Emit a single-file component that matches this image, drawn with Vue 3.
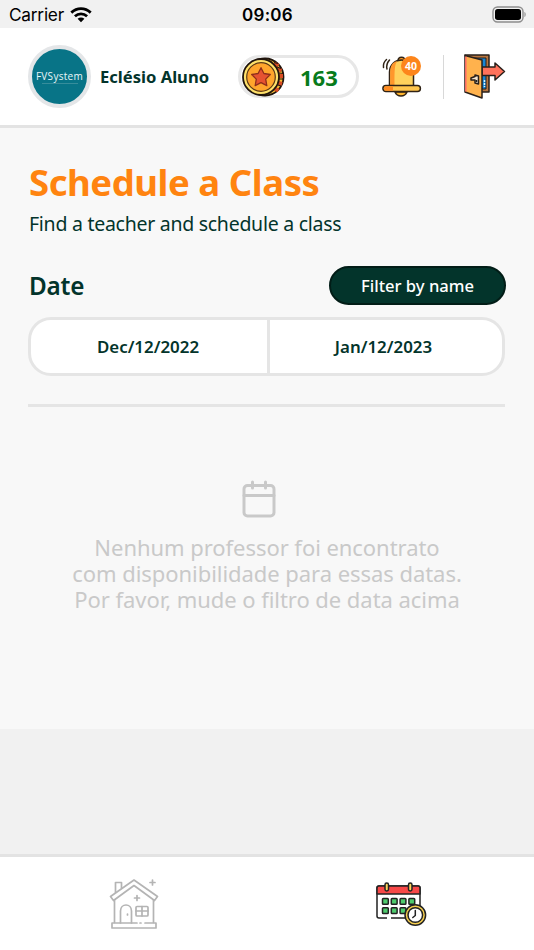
<script setup>
const profile = { name: 'Eclésio Aluno', coins: 163, notifications: 40 }
const dates = ['Dec/12/2022', 'Jan/12/2023']
const emptyMessage = [
  'Nenhum professor foi encontrato',
  'com disponibilidade para essas datas.',
  'Por favor, mude o filtro de data acima',
].join('\n')
const calendarCells = [0, 1, 2, 3, 4, 5, 6].map((i) => ({ x: 6.5 + (i % 4) * 8.8, y: 16.5 + Math.floor(i / 4) * 9.2 }))
</script>

<template>
  <div class="screen">
    <div class="status">
      <div class="carrier">
        <span>Carrier</span>
        <svg width="22" height="16" viewBox="0 0 22 16" fill="none" stroke="#000" stroke-width="2.8">
          <path d="M1.3 5.6C7 .3 15 .3 20.7 5.6" />
          <path d="M4.9 9.2c3.6-3.2 8.6-3.2 12.2 0" />
          <path d="M7.6 11.7L11 15.3l3.4-3.6c-2-1.7-4.8-1.7-6.8 0z" fill="#000" stroke="none" />
        </svg>
      </div>
      <span class="clock">09:06</span>
      <div class="battery">
        <svg width="34" height="17" viewBox="0 0 34 17">
          <rect x="1" y="1" width="30" height="15" rx="4.5" fill="none" stroke="#8d8d8d" stroke-width="1.4" />
          <rect x="3" y="3" width="26" height="11" rx="2.7" />
          <path d="M32.4 6c1.8.5 1.8 4.5 0 5z" fill="#999" />
        </svg>
      </div>
    </div>

    <header class="header">
      <div class="avatar">
        <span class="brand">FVSystem</span>
        <span class="brand-line"></span>
      </div>
      <span class="name">{{ profile.name }}</span>
      <div class="coins">
        <svg width="43" height="40" viewBox="0 0 43 40">
          <ellipse cx="23" cy="20" rx="18.5" ry="18.5" fill="#f7bd35" stroke="#20150d" stroke-width="1.8" />
          <path d="M32 6.500l4.500 2M35.500 12l4 1.500M37 19h4M36.500 26l3.500 1M33 32l3.500 1.500" stroke="#d94c24" stroke-width="4" />
          <path d="M32 5.500l4 1M35 10l4 1.500M37 16l4 .5M37 22h4M36 28l3 1" stroke="#291711" stroke-width="1.1" />
          <circle cx="19" cy="20" r="18" fill="#ffe16a" stroke="#20150d" stroke-width="1.8" />
          <circle cx="19" cy="20" r="14.3" fill="#ffa52c" stroke="#5d3915" stroke-width="1.2" />
          <path d="M19 10.7l2.9 5.8 6.4 1-4.6 4.6 1.1 6.5-5.8-3-5.8 3 1.1-6.5-4.6-4.6 6.4-1z" fill="#e65331" stroke="#8f2f1b" stroke-width="1.3" stroke-linejoin="round" />
        </svg>
        <span class="amount">{{ profile.coins }}</span>
      </div>
      <div class="bell">
        <svg width="40" height="43" viewBox="0 0 40 43" stroke="#302316" stroke-width="1.5" stroke-linecap="round" stroke-linejoin="round">
          <path d="M13 36a6.5 6.5 0 0 0 12 0z" fill="#ffb52e" />
          <path d="M16 5c0-5 7-5 7 0" fill="#ff9e2a" />
          <path d="M7.500 30V16C8 0 31 0 31.500 16v14z" fill="#ffd15c" />
          <path d="M8.200 29V16c0-7 3-10 7-11-2.600 4-2.700 8-2.700 24z" fill="#ff972c" stroke="none" />
          <rect x=".9" y="29.500" width="37.500" height="6" rx="3" fill="#ffc54c" />
          <path d="M4 30.300h7v4.400H4a2.200 2.200 0 0 1 0-4.400z" fill="#ff8b22" stroke="none" />
          <path d="M1.500 11.500c-.5-3.500.8-6 3-8M5 13c-.8-3.500.2-6.500 2.500-9" fill="none" />
        </svg>
        <span class="badge">{{ profile.notifications }}</span>
      </div>
      <span class="divider"></span>
      <svg class="exit" width="42" height="46" viewBox="0 0 42 46" stroke="#29201b" stroke-width="1.5" stroke-linejoin="round">
        <path d="M1 1h24v37H15z" fill="#b7753f" />
        <path d="M9 4h13v31h-4z" fill="#1686d5" stroke-width="1" />
        <path d="M18 13h13V9l9.500 8.500L31 26v-4.500H18z" fill="#ff725b" />
        <path d="M1 1.500l17 4.500v38L1 38z" fill="#ffb24d" />
        <path d="M1.800 2.500v35" stroke="#ff6d65" />
        <path d="M7 24l4-1.500v-1.500l3.500 1v8l-3.500-1v-3H7z" fill="#f4e5d0" />
        <circle cx="12.500" cy="27" r="1" fill="#111" stroke="none" />
        <path d="M20.500 26v7" stroke="#d5f3ff" stroke-width="1.500" stroke-dasharray="2 1" />
      </svg>
    </header>

    <main class="content">
      <h1>Schedule a Class</h1>
      <p class="subtitle">Find a teacher and schedule a class</p>
      <div class="filter">
        <h2>Date</h2>
        <button type="button"><span>Filter by name</span></button>
      </div>
      <div class="range">
        <div v-for="date in dates" :key="date" class="date"><span>{{ date }}</span></div>
      </div>
      <div class="rule"></div>
      <div class="empty">
        <svg width="34" height="38" viewBox="0 0 34 38" fill="none" stroke="#c9c9c9" stroke-width="3" stroke-linecap="round">
          <rect x="2" y="5.500" width="30" height="30.500" rx="3.500" />
          <path d="M2 15.500h30M10.500 2v6M23.500 2v6" />
        </svg>
        <p class="message">{{ emptyMessage }}</p>
      </div>
    </main>

    <nav class="tabs">
      <div class="tab">
        <svg class="house" width="52" height="52" viewBox="0 0 52 52" fill="none" stroke="#b4b4b4" stroke-width="1.700" stroke-linejoin="round" stroke-linecap="round">
          <path d="M6.500 14.500V4.500h6v5.500" />
          <path d="M1.500 18.500L25 2l23.500 16.500-3 4L25 7.500 4.500 22.500z" />
          <path d="M5.500 22v22.500M44.500 22v22.500" />
          <path d="M3 45h25M36 45h11v5H3v-5M31 45h1" />
          <path d="M11.500 45V33c0-8 11-8 11 0v12M18.500 36v1" />
          <rect x="27" y="28.500" width="12" height="9.500" rx="1" />
          <path d="M33 28.500V38M27 33h12M28 17.500v5M25.500 20h5M43.500 2v5M41 4.500h5" />
        </svg>
      </div>
      <div class="tab">
        <svg class="agenda" width="51" height="45" viewBox="0 0 51 45" stroke="#222" stroke-width="1.500" stroke-linejoin="round">
          <rect x="1" y="4" width="43" height="32" rx="2" fill="#fff" />
          <path d="M1 12V6q0-2 2-2h39q2 0 2 2v6z" fill="#f84848" />
          <rect x="9" y="1" width="3.500" height="8" rx="1.700" fill="#ffd55b" />
          <rect x="32.500" y="1" width="3.500" height="8" rx="1.700" fill="#ffd55b" />
          <rect v-for="(cell, i) in calendarCells" :key="i" :x="cell.x" :y="cell.y" width="5.800" height="5.800" rx=".8" fill="#4ecb6d" />
          <path d="M11 36h4" stroke="#fff" stroke-width="2" />
          <circle cx="39.300" cy="33" r="10.300" fill="#f7cf50" />
          <circle cx="39.300" cy="33" r="7.300" fill="#fff" />
          <path d="M39.300 28.500v5l-2.500 2" fill="none" stroke-linecap="round" />
        </svg>
      </div>
    </nav>
  </div>
</template>

<style>
body { margin: 0; }
</style>

<style scoped>
* { box-sizing: border-box; }
.screen { width: 534px; height: 950px; display: flex; flex-direction: column; background: #f1f1f1; color: #03342b; font-family: "Noto Sans", sans-serif; overflow: hidden; white-space: nowrap; }
.status { height: 28px; display: grid; grid-template-columns: 1fr auto 1fr; align-items: center; padding: 1px 8px 0 9px; color: #000; font: 17.300px Inter, sans-serif; }
.carrier { display: flex; align-items: center; gap: 6px; letter-spacing: -.25px; }
.clock { font-weight: 600; font-size: 17px; letter-spacing: .3px; }
.battery { display: flex; justify-content: flex-end; padding-bottom: 1px; }
.header { height: 100px; display: flex; align-items: center; background: #fff; border-bottom: 3px solid #e3e3e3; padding: 0 0 0 28px; }
.avatar { width: 63px; height: 63px; border: 4px solid #e4e6e8; border-radius: 50%; background: #087487; display: flex; flex-direction: column; align-items: center; justify-content: center; color: #e8f6f8; }
.brand { font: 10px/12px "Open Sans", sans-serif; letter-spacing: .3px; }
.brand-line { width: 36px; height: 1px; margin-top: 1px; background: #368d9b; }
.name { width: 147px; padding-left: 9px; font-size: 16.600px; font-weight: 700; }
.coins { width: 121px; height: 43px; border: 3px solid #e7e7e7; border-radius: 22px; display: flex; align-items: center; padding-left: 1px; }
.coins svg { flex: none; }
.amount { margin-left: 15px; color: #087b1b; font-size: 22px; font-weight: 700; line-height: 30px; }
.bell { width: 41px; height: 42px; margin-left: 23px; position: relative; }
.badge { position: absolute; left: 19px; top: 0; width: 20px; height: 20px; border-radius: 50%; background: #fd851b; color: #fff; text-align: center; font-size: 10.500px; line-height: 20px; font-weight: 700; }
.divider { width: 1px; height: 44px; margin-left: 20px; background: #d8d8d8; }
.exit { margin-left: 20px; }
.content { height: 601px; background: #f8f8f8; padding: 29px 29px 0; }
h1, h2, p { margin: 0; }
h1 { height: 50px; color: #ff8410; font-size: 36.500px; line-height: 50px; font-weight: 700; letter-spacing: -.45px; }
.subtitle { height: 30px; margin-top: 2px; font-size: 19.500px; line-height: 30px; letter-spacing: -.27px; }
.filter { height: 39px; margin-top: 27px; display: flex; justify-content: space-between; align-items: center; }
h2 { font-size: 24.300px; line-height: 36px; font-weight: 600; letter-spacing: -.2px; }
button { width: 177px; height: 39px; margin-right: -1px; border: 2px solid #021d17; border-radius: 20px; background: #03342b; color: #fff; font: 500 16.600px "Noto Sans", sans-serif; padding: 0; }
.range { height: 59px; margin: 12px 0 0 -1px; display: flex; border: 3px solid #e5e5e5; border-radius: 23px; background: #fff; }
.date { flex: 1; display: flex; align-items: center; justify-content: center; font-size: 16.900px; font-weight: 600; }
.date:first-child { flex: 0 0 236px; padding-right: 2px; }
.date + .date { border-left: 3px solid #e5e5e5; padding-right: 5px; }
.rule { height: 3px; margin: 28px 0 0 -1px; background: #e5e5e5; }
.empty { padding-top: 73px; display: flex; flex-direction: column; align-items: center; color: #c9c9c9; }
.empty svg { margin: 0 16px 17px 0; }
.message { font-size: 22px; line-height: 25.800px; letter-spacing: -.05px; text-align: center; white-space: pre-line; }
.tabs { height: 96px; margin-top: auto; display: grid; grid-template-columns: 1fr 1fr; background: #fff; border-top: 3px solid #e3e3e3; }
.tab { display: flex; justify-content: center; padding: 21px 0 0 2px; }
.agenda { margin-top: 4px; }
</style>
